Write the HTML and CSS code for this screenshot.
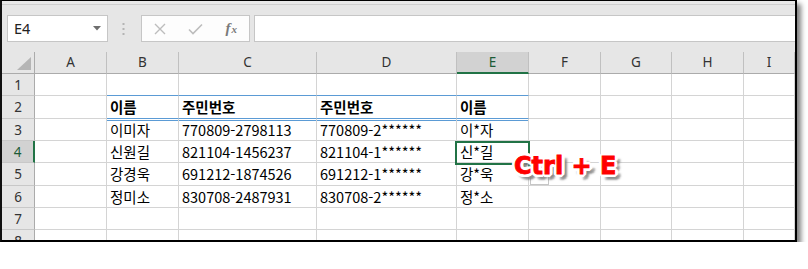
FILE: index.html
```html
<!DOCTYPE html>
<html lang="ko">
<head>
<meta charset="utf-8">
<title>Excel Ctrl+E</title>
<link rel="stylesheet" href="styles.css">
</head>
<body>
<div class="frame">
  <div class="strip"></div>
  <div class="fbar">
    <div class="namebox"><span class="nb-text">E4</span><svg class="nb-arrow" width="8" height="5" viewBox="0 0 8 5"><path d="M0 0H8L4 4.5Z" fill="#6e6e6e"/></svg></div>
    <div class="grip"><svg width="3" height="12" viewBox="0 0 3 12"><rect x="0.5" y="0" width="2" height="2" fill="#b4b4b4"/><rect x="0.5" y="5" width="2" height="2" fill="#b4b4b4"/><rect x="0.5" y="10" width="2" height="2" fill="#b4b4b4"/></svg></div>
    <div class="fnbox">
      <span class="slot"><svg width="12" height="12" viewBox="0 0 12 12"><path d="M1 1L11 11M11 1L1 11" stroke="#bdbdbd" stroke-width="1.4" fill="none"/></svg></span>
      <span class="slot"><svg width="15" height="12" viewBox="0 0 15 12"><path d="M1 6.5L5 10.5L14 1.5" stroke="#bdbdbd" stroke-width="1.6" fill="none"/></svg></span>
      <span class="slot"><span class="fx">f<span class="fx-x">x</span></span></span>
    </div>
    <div class="finput"></div>
  </div>
  <div class="sheet">
    <div class="grid">
      <div class="corner"><svg class="tri" width="14" height="13" viewBox="0 0 14 13"><path d="M14 0V13H0Z" fill="#b5b5b5"/></svg></div>
      <div class="ch">A</div><div class="ch">B</div><div class="ch">C</div><div class="ch">D</div><div class="ch sel-h">E</div><div class="ch">F</div><div class="ch">G</div><div class="ch">H</div><div class="ch">I</div>

      <div class="rh">1</div>
      <div class="c"></div><div class="c bt"></div><div class="c bt"></div><div class="c bt"></div><div class="c bt"></div><div class="c"></div><div class="c"></div><div class="c"></div><div class="c"></div>

      <div class="rh">2</div>
      <div class="c"></div><div class="c hb">이름</div><div class="c hb">주민번호</div><div class="c hb">주민번호</div><div class="c hb">이름</div><div class="c"></div><div class="c"></div><div class="c"></div><div class="c"></div>

      <div class="rh">3</div>
      <div class="c"></div><div class="c dt">이미자</div><div class="c dt">770809-2798113</div><div class="c dt">770809-2******</div><div class="c dt">이*자</div><div class="c"></div><div class="c"></div><div class="c"></div><div class="c"></div>

      <div class="rh sel-r">4</div>
      <div class="c"></div><div class="c">신원길</div><div class="c">821104-1456237</div><div class="c">821104-1******</div><div class="c">신*길</div><div class="c"></div><div class="c"></div><div class="c"></div><div class="c"></div>

      <div class="rh">5</div>
      <div class="c"></div><div class="c">강경욱</div><div class="c">691212-1874526</div><div class="c">691212-1******</div><div class="c">강*욱</div><div class="c"></div><div class="c"></div><div class="c"></div><div class="c"></div>

      <div class="rh">6</div>
      <div class="c"></div><div class="c">정미소</div><div class="c">830708-2487931</div><div class="c">830708-2******</div><div class="c">정*소</div><div class="c"></div><div class="c"></div><div class="c"></div><div class="c"></div>

      <div class="rh">7</div>
      <div class="c"></div><div class="c"></div><div class="c"></div><div class="c"></div><div class="c"></div><div class="c"></div><div class="c"></div><div class="c"></div><div class="c"></div>

      <div class="rh">8</div>
      <div class="c"></div><div class="c"></div><div class="c"></div><div class="c"></div><div class="c"></div><div class="c"></div><div class="c"></div><div class="c"></div><div class="c"></div>
    </div>
    <div class="ffopt"></div>
    <div class="selbox"></div>
    <div class="handle"></div>
    <div class="hint">Ctrl + E</div>
  </div>
</div>
</body>
</html>
```

FILE: styles.css
```css
html, body {
  margin: 0;
  padding: 0;
  background: #ffffff;
}

.frame {
  box-sizing: border-box;
  width: 797px;
  height: 242px;
  border-top: 1px solid #000;
  border-left: 2px solid #111;
  border-right: 2px solid #000;
  border-bottom: 2px solid #000;
  background: #e6e6e6;
  box-shadow: 4px 4px 5px rgba(0, 0, 0, 0.5);
  overflow: hidden;
  font-family: "Noto Sans", "Liberation Sans", sans-serif;
}

.strip {
  height: 3px;
  border-bottom: 1px solid #cfcfcf;
  background: #e8e8e8;
}

.fbar {
  height: 47px;
  display: flex;
  align-items: center;
  padding-left: 5px;
}

.namebox {
  box-sizing: border-box;
  width: 101px;
  height: 27px;
  background: #fff;
  border: 1px solid #c6c6c6;
  display: flex;
  align-items: center;
  justify-content: space-between;
  padding: 0 6px 0 6px;
}

.nb-text {
  font-size: 14.5px;
  color: #222;
  line-height: 1;
}

.nb-arrow {
  margin-top: -1px;
}

.grip {
  width: 31px;
  display: flex;
  justify-content: center;
  align-items: center;
  height: 27px;
  padding-right: 2px;
}

.fnbox {
  box-sizing: border-box;
  width: 109px;
  height: 27px;
  background: #fdfdfd;
  border: 1px solid #c6c6c6;
  display: grid;
  grid-template-columns: repeat(3, 1fr);
  align-items: center;
}

.slot {
  display: flex;
  justify-content: center;
  align-items: center;
}

.fx {
  font-family: "Liberation Serif", "DejaVu Serif", serif;
  font-style: italic;
  font-weight: bold;
  font-size: 15px;
  color: #7a7a7a;
  line-height: 1;
}

.fx-x {
  font-size: 11px;
  margin-left: 1px;
}

.finput {
  flex: 1;
  box-sizing: border-box;
  height: 27px;
  margin-left: 4px;
  background: #fff;
  border: 1px solid #c6c6c6;
  border-right: none;
}

.sheet {
  position: relative;
  height: 188px;
  overflow: hidden;
  background: #fff;
}

.grid {
  display: grid;
  grid-template-columns: 33px 72px 72px 138px 140px 72px 72px 71px 72px 51px;
  grid-template-rows: 22px 22px 23px 22px 22px 23px 22px 22px 22px;
}

.grid > div {
  box-sizing: border-box;
}

.corner {
  background: #e6e6e6;
  border-right: 1px solid #ababab;
  border-bottom: 1px solid #ababab;
  position: relative;
}

.tri {
  position: absolute;
  right: 3px;
  bottom: 3px;
}

.ch {
  background: #e6e6e6;
  border-right: 1px solid #c0c0c0;
  border-bottom: 1px solid #ababab;
  display: flex;
  justify-content: center;
  align-items: center;
  font-size: 13.5px;
  color: #333;
  padding-bottom: 2px;
}

.ch.sel-h {
  background: #d2d2d2;
  border-bottom: 2px solid #217346;
  color: #1c5b36;
  padding-bottom: 1px;
}

.rh {
  background: #e6e6e6;
  border-right: 1px solid #ababab;
  border-bottom: 1px solid #c8c8c8;
  display: flex;
  justify-content: center;
  align-items: center;
  font-size: 13.5px;
  color: #333;
}

.rh.sel-r {
  background: #d2d2d2;
  border-right: 2px solid #217346;
  color: #1c5b36;
}

.c {
  border-right: 1px solid #d4d4d4;
  border-bottom: 1px solid #d4d4d4;
  display: flex;
  align-items: center;
  padding-left: 3px;
  font-family: "Noto Sans CJK KR", "Noto Sans", sans-serif;
  font-size: 14.5px;
  line-height: 1;
  color: #000;
  white-space: nowrap;
  padding-top: 1px;
}

.c.bt {
  border-bottom: 1px solid #5b9bd5;
}

.c.hb {
  font-weight: bold;
  border-bottom: 1px solid #5b9bd5;
}

.c.dt {
  box-shadow: inset 0 1px 0 #ffffff, inset 0 2px 0 #5b9bd5;
}

.selbox {
  position: absolute;
  left: 453px;
  top: 89px;
  width: 75px;
  height: 24px;
  box-sizing: border-box;
  border: 2px solid #217346;
}

.handle {
  position: absolute;
  left: 525px;
  top: 110px;
  width: 6px;
  height: 6px;
  box-sizing: border-box;
  background: #217346;
  border: 1px solid #fff;
}

.ffopt {
  position: absolute;
  left: 528px;
  top: 114px;
  width: 19px;
  height: 19px;
  box-sizing: border-box;
  background: #fff;
  border: 1px solid #c6c6c6;
}

.hint {
  position: absolute;
  left: 512px;
  top: 102px;
  font-family: "DejaVu Sans", "Liberation Sans", sans-serif;
  font-weight: bold;
  font-size: 24px;
  line-height: 24px;
  color: #ff0000;
  -webkit-text-stroke: 0.8px #ff0000;
  white-space: nowrap;
  text-shadow:
    3px 0 0 #fff, -3px 0 0 #fff, 0 3px 0 #fff, 0 -3px 0 #fff,
    2px 2px 0 #fff, -2px 2px 0 #fff, 2px -2px 0 #fff, -2px -2px 0 #fff,
    3px 1px 0 #fff, 3px -1px 0 #fff, -3px 1px 0 #fff, -3px -1px 0 #fff,
    1px 3px 0 #fff, -1px 3px 0 #fff, 1px -3px 0 #fff, -1px -3px 0 #fff,
    5px 5px 2px rgba(130, 130, 130, 0.75),
    6px 3px 2px rgba(130, 130, 130, 0.6),
    3px 6px 2px rgba(130, 130, 130, 0.6);
}
```
